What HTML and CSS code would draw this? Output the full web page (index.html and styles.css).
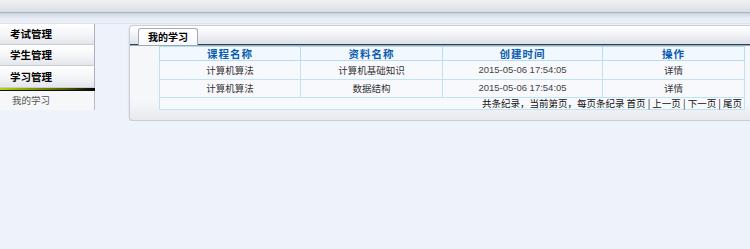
FILE: index.html
```html
<!DOCTYPE html>
<html lang="zh-CN">

<head>
  <meta charset="UTF-8">
  <title>我的学习</title>
  <link rel="stylesheet" href="styles.css">
</head>

<body>

  <!-- header -->
  <div class="top"></div>
  <div class="band"></div>

  <div class="layout">
    <!-- left menu -->
    <div class="side">
      <div class="menu-item">考试管理</div>
      <div class="menu-item">学生管理</div>
      <div class="menu-item open">学习管理</div>
      <div class="menu-bar"></div>
      <div class="sub-item">我的学习</div>
    </div>

    <!-- content -->
    <div class="main">
      <div class="panel">
        <div class="panel-head">
          <span class="tab">我的学习</span>
        </div>
        <div class="panel-body">
          <table class="list">
            <colgroup>
              <col style="width:141px">
              <col style="width:142px">
              <col style="width:160px">
              <col style="width:142px">
            </colgroup>
            <tr>
              <th>课程名称</th>
              <th>资料名称</th>
              <th>创建时间</th>
              <th>操作</th>
            </tr>
            <tr>
              <td>计算机算法</td>
              <td>计算机基础知识</td>
              <td class="date">2015-05-06 17:54:05</td>
              <td>详情</td>
            </tr>
            <tr>
              <td>计算机算法</td>
              <td>数据结构</td>
              <td class="date">2015-05-06 17:54:05</td>
              <td>详情</td>
            </tr>
            <tr class="pager">
              <td colspan="4">共条纪录，当前第页，每页条纪录 首页 | 上一页 | 下一页 | 尾页</td>
            </tr>
          </table>
        </div>
      </div>
    </div>
  </div>

</body>

</html>
```

FILE: styles.css
```css
* {
  box-sizing: border-box;
}

body {
  margin: 0;
  background: #eef2fa;
  font-family: "Noto Sans CJK SC", sans-serif;
  font-size: 10px;
  color: #333;
}

.top {
  height: 13px;
  background: linear-gradient(#f1f2f4, #d9dde3);
  border-bottom: 1px solid #aab4c1;
}

.band {
  height: 11px;
  background: linear-gradient(#cad2de, #e4e9f3 45%, #ebf0f8);
  border-bottom: 1px solid #dce3ed;
}

.layout {
  display: flex;
}

/* left menu */
.side {
  width: 95px;
  flex-shrink: 0;
}

.menu-item {
  height: 21px;
  line-height: 20px;
  padding-left: 10px;
  font-size: 10.5px;
  font-weight: bold;
  color: #000;
  background: linear-gradient(#ffffff, #f4f5f7 55%, #e3e6ea);
  border-right: 1px solid #a9b1bb;
  border-bottom: 1px solid #c7cdd5;
}

.menu-item.open {
  height: 22px;
  line-height: 21px;
}

.menu-bar {
  height: 3px;
  background: linear-gradient(to right, #b9d600, #4d5a00 70%, #000);
  border-bottom: 1px solid #111;
}

.sub-item {
  height: 19px;
  line-height: 19px;
  padding-left: 12px;
  font-size: 9.5px;
  color: #555;
  background: #f6f7f9;
  border-right: 1px solid #b5bcc6;
}

/* content panel */
.main {
  flex: 1;
  padding-left: 34px;
  padding-top: 1px;
}

.panel {
  border: 1px solid #c6cdd6;
  border-right: none;
  border-radius: 4px 0 0 4px;
  background: linear-gradient(#f6f7f9 80%, #e6e9ed);
  box-shadow: 0 1px 2px rgba(0, 0, 0, 0.15);
}

.panel-head {
  height: 19px;
  display: flex;
  align-items: flex-end;
  padding-left: 8px;
  background: linear-gradient(#ffffff, #f1f3f6 50%, #dce1e8);
  border-bottom: 1px solid #35434f;
  box-shadow: 0 1px 0 #9ba7b4;
  border-radius: 4px 0 0 0;
}

.tab {
  width: 60px;
  height: 17px;
  margin-bottom: -1px;
  line-height: 16px;
  text-align: center;
  font-size: 10px;
  font-weight: bold;
  color: #000;
  background: linear-gradient(#ffffff, #f7f8fa);
  border: 1px solid #a1acb8;
  border-bottom: none;
  border-radius: 3px 3px 0 0;
  position: relative;
  z-index: 1;
}

.panel-body {
  padding: 1px 0 10px 29px;
}

.list {
  width: 585px;
  table-layout: fixed;
  border-collapse: collapse;
  border: 1px solid #b5dcf1;
}

.list th {
  height: 14px;
  padding: 0;
  line-height: 12px;
  font-size: 10.5px;
  font-weight: bold;
  letter-spacing: 1px;
  color: #0a5cb0;
  background: #f1f8fe;
  border: 1px solid #b5dcf1;
}

.list td {
  height: 18.5px;
  padding: 0;
  line-height: 16px;
  font-size: 9.5px;
  text-align: center;
  color: #333;
  background: #f8f9fd;
  border: 1px solid #bfe2f4;
}

.list td.date {
  font-family: "Liberation Sans", sans-serif;
  font-size: 9.5px;
  color: #444;
}

.list .pager td {
  height: 12px;
  line-height: 11px;
  text-align: right;
  padding-right: 2px;
  color: #111;
}
```
